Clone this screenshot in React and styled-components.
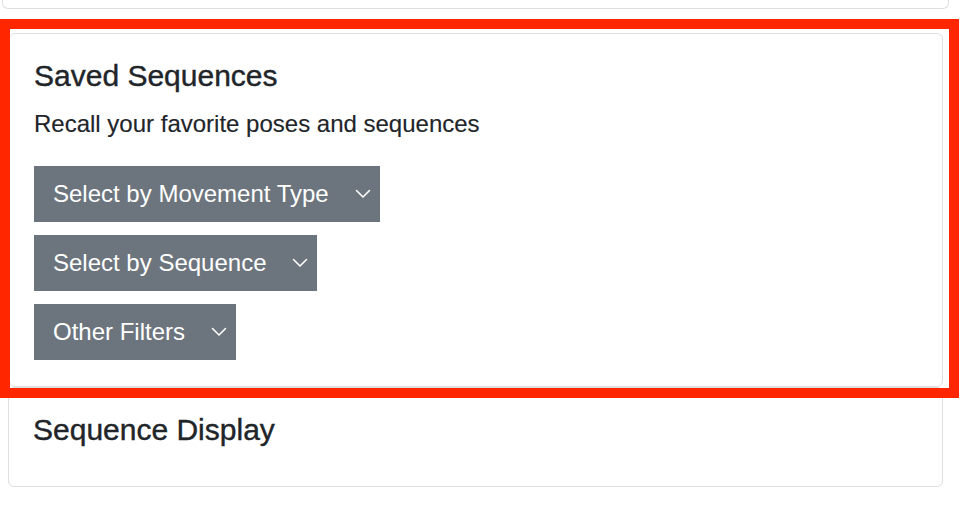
import React from "react";
import styled, { createGlobalStyle } from "styled-components";

const Global = createGlobalStyle`
  html, body { margin: 0; padding: 0; background: #fff; }
  body {
    font-family: "Liberation Sans", Arial, sans-serif;
    color: #212529;
    -webkit-font-smoothing: antialiased;
  }
  * { box-sizing: border-box; }
`;

const Page = styled.div`
  position: relative;
  width: 962px;
  height: 506px;
  overflow: hidden;
  padding: 0 19px 0 9px;
`;

const Card = styled.section`
  background: #fff;
  border: 1px solid #dfdfdf;
  border-radius: 6px;
`;

const TopCard = styled(Card)`
  height: 9px;
  margin: 0 -6px 0 -7px;
  border-top: none;
  border-radius: 0 0 6px 6px;
`;

const MiddleCard = styled(Card)`
  margin-top: 24px;
`;

const BottomCard = styled(Card)`
  margin-left: -1px;
`;

const Body = styled.div`
  padding: 24px 24px 26px;
  display: flex;
  flex-direction: column;
  align-items: flex-start;
`;

const Title = styled.h5`
  margin: 0 0 12px;
  font-size: 30px;
  line-height: 36px;
  font-weight: 500;
  color: #212529;
  -webkit-text-stroke: 0.4px #212529;
`;

const Text = styled.p`
  margin: 0 0 24px;
  font-size: 24px;
  line-height: 36px;
  -webkit-text-stroke: 0.15px #212529;
`;

const Filters = styled.div`
  display: flex;
  flex-direction: column;
  align-items: flex-start;
  gap: 13px;
`;

const Toggle = styled.button`
  display: inline-flex;
  align-items: center;
  height: 56px;
  padding: 9px 8px 9px 18px;
  border: 1px solid #6c757d;
  border-radius: 0;
  background: #6c757d;
  color: #fff;
  font-family: "Liberation Sans", Arial, sans-serif;
  font-size: 24px;
  line-height: 36px;
  cursor: pointer;
`;

const Chevron = styled.svg`
  width: 16px;
  height: 16px;
  margin-left: 26px;
  flex: none;
`;

const Highlight = styled.div`
  position: absolute;
  left: 0;
  top: 19px;
  width: 959px;
  height: 379px;
  border: 10px solid #ff2600;
  pointer-events: none;
`;

const Caret = () => (
  <Chevron viewBox="0 0 16 16" fill="none" stroke="#fff" strokeWidth="1.6" strokeLinecap="round" strokeLinejoin="round">
    <path d="M1.5 4.5 L8 11 L14.5 4.5" />
  </Chevron>
);

const filters = ["Select by Movement Type", "Select by Sequence", "Other Filters"];

export default function App() {
  return (
    <>
      <Global />
      <Page>
        <TopCard />
        <MiddleCard>
          <Body>
            <Title>Saved Sequences</Title>
            <Text>Recall your favorite poses and sequences</Text>
            <Filters>
              {filters.map((f) => (
                <Toggle key={f} type="button">
                  {f}
                  <Caret />
                </Toggle>
              ))}
            </Filters>
          </Body>
        </MiddleCard>
        <BottomCard>
          <Body>
            <Title>Sequence Display</Title>
          </Body>
        </BottomCard>
        <Highlight />
      </Page>
    </>
  );
}
